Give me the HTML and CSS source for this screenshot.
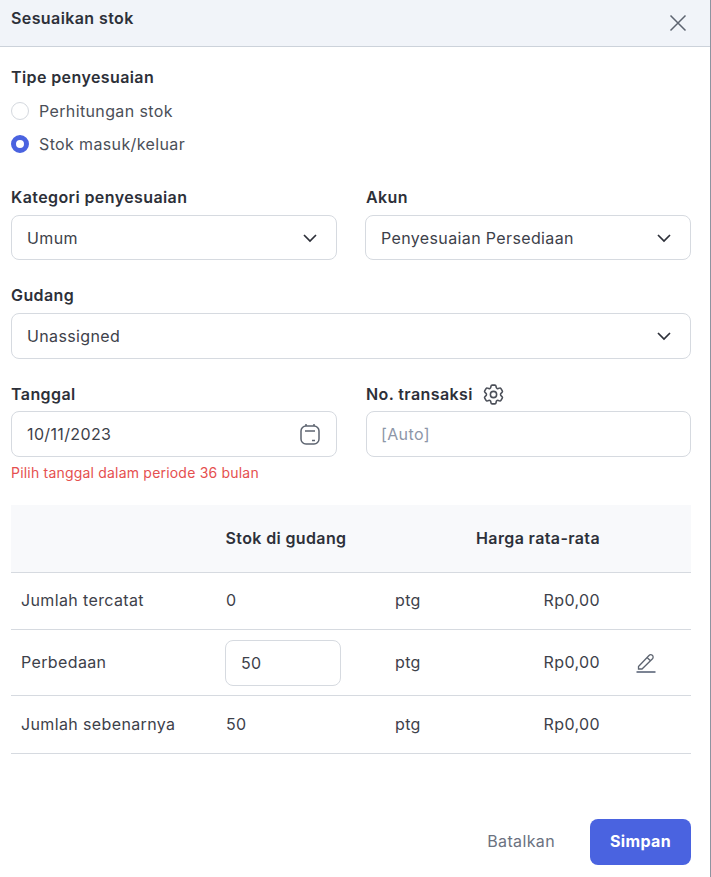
FILE: index.html
```html
<!DOCTYPE html>
<html lang="id">
<head>
<meta charset="utf-8">
<title>Sesuaikan stok</title>
<link rel="stylesheet" href="styles.css">
</head>
<body>
<div class="modal">
  <header class="head">
    <h1 class="title">Sesuaikan stok</h1>
    <svg class="close" width="18" height="18" viewBox="0 0 18 18"><path d="M1.500 1.500l15 15M16.500 1.500l-15 15"/></svg>
  </header>
  <main class="body">
    <div class="label tipe">Tipe penyesuaian</div>
    <div class="radio-row first"><span class="radio"></span>Perhitungan stok</div>
    <div class="radio-row"><span class="radio on"></span>Stok masuk/keluar</div>
    <div class="grid two r1">
      <div class="field">
        <div class="label">Kategori penyesuaian</div>
        <div class="input">Umum<svg class="chev" width="16" height="10" viewBox="0 0 16 10"><path d="M2 2l6 6 6-6"/></svg></div>
      </div>
      <div class="field">
        <div class="label">Akun</div>
        <div class="input">Penyesuaian Persediaan<svg class="chev" width="16" height="10" viewBox="0 0 16 10"><path d="M2 2l6 6 6-6"/></svg></div>
      </div>
    </div>
    <div class="field r2">
      <div class="label">Gudang</div>
      <div class="input tall">Unassigned<svg class="chev" width="16" height="10" viewBox="0 0 16 10"><path d="M2 2l6 6 6-6"/></svg></div>
    </div>
    <div class="grid two r3">
      <div class="field">
        <div class="label">Tanggal</div>
        <div class="input tall">10/11/2023<svg class="cal" width="20" height="22" viewBox="0 0 20 22"><rect x="1" y="3" width="18" height="18" rx="5"/><path d="M6 1v2M14 1v2M5 8h10M12 17.500h3"/></svg></div>
        <div class="error">Pilih tanggal dalam periode 36 bulan</div>
      </div>
      <div class="field">
        <div class="label">No. transaksi<svg class="gear" width="25" height="25" viewBox="0 0 24 24"><circle cx="12" cy="12" r="3"/><path d="M9.594 3.940c.09-.542.56-.94 1.110-.94h2.593c.55 0 1.020.398 1.110.94l.213 1.281c.063.374.313.686.645.870.074.04.147.083.22.127.324.196.72.257 1.075.124l1.217-.456a1.125 1.125 0 011.370.49l1.296 2.247a1.125 1.125 0 01-.26 1.431l-1.003.827c-.293.24-.438.613-.431.992a6.759 6.759 0 010 .255c-.007.378.138.75.43.99l1.005.828c.424.35.534.954.26 1.430l-1.298 2.247a1.125 1.125 0 01-1.369.491l-1.217-.456c-.355-.133-.75-.072-1.076.124a6.570 6.570 0 01-.22.128c-.331.183-.581.495-.644.869l-.213 1.280c-.09.543-.56.941-1.110.941h-2.594c-.55 0-1.020-.398-1.110-.94l-.213-1.281c-.062-.374-.312-.686-.644-.87a6.520 6.520 0 01-.22-.127c-.325-.196-.72-.257-1.076-.124l-1.217.456a1.125 1.125 0 01-1.369-.49l-1.297-2.247a1.125 1.125 0 01.26-1.431l1.004-.827c.292-.24.437-.613.43-.992a6.932 6.932 0 010-.255c.007-.378-.138-.75-.43-.99l-1.004-.828a1.125 1.125 0 01-.26-1.430l1.297-2.247a1.125 1.125 0 011.370-.491l1.216.456c.356.133.751.072 1.076-.124.072-.044.146-.087.22-.128.332-.183.582-.495.644-.869l.214-1.281z"/></svg></div>
        <div class="input tall placeholder">[Auto]</div>
      </div>
    </div>
    <div class="table">
      <div class="row thead"><span></span><span class="c-stock">Stok di gudang</span><span></span><span class="c-price">Harga rata-rata</span><span></span></div>
      <div class="row r-a"><span>Jumlah tercatat</span><span class="c-stock">0</span><span>ptg</span><span class="c-price">Rp0,00</span><span></span></div>
      <div class="row r-b"><span>Perbedaan</span><span class="c-stock"><span class="qty">50</span></span><span>ptg</span><span class="c-price">Rp0,00</span><span class="c-edit"><svg class="pen" width="22" height="22" viewBox="0 0 22 22"><path d="M3.500 15.500L14 4.500a2.300 2.300 0 0 1 3.500 3.200L7 18H3.500zM12 6.500l3.500 3.200"/><path class="pen-line" d="M1.500 21h19"/></svg></span></div>
      <div class="row r-c"><span>Jumlah sebenarnya</span><span class="c-stock">50</span><span>ptg</span><span class="c-price">Rp0,00</span><span></span></div>
    </div>
  </main>
  <footer class="foot">
    <span class="cancel">Batalkan</span>
    <span class="save">Simpan</span>
  </footer>
</div>
</body>
</html>
```
FILE: styles.css
```css
* { box-sizing: border-box; }
html, body { margin: 0; padding: 0; }
body { width: 711px; height: 877px; overflow: hidden; background: #fff; font-family: Inter, sans-serif; color: #2d3039; font-size: 16px; letter-spacing: .37px; }
.modal { display: flex; flex-direction: column; height: 877px; border-right: 1px solid #8e94a0; }
.head { height: 47px; flex: none; background: #f1f4f9; border-bottom: 1px solid #ccd2da; display: flex; justify-content: space-between; padding: 9px 23px 0 11px; }
.title { margin: 0; font-size: 16px; line-height: 18px; font-weight: 600; letter-spacing: .4px; }
.close { margin-top: 5px; fill: none; stroke: #5d6470; stroke-width: 1.500; }
.body { flex: 1; padding: 0 19px 0 11px; }
.label { font-size: 16px; line-height: 20px; font-weight: 600; letter-spacing: .4px; display: flex; align-items: center; gap: 9px; height: 20px; }
.tipe { margin-top: 20px; }
.radio-row { display: flex; align-items: center; gap: 10px; height: 20px; margin-top: 13px; line-height: 20px; color: #4b4f58; }
.radio-row.first { margin-top: 14px; }
.radio { width: 18px; height: 18px; border-radius: 50%; border: 1px solid #d4d8de; background: #fff; flex: none; }
.radio.on { border: 5px solid #4a63e0; }
.grid.two { display: grid; grid-template-columns: 326px 325px; column-gap: 29px; }
.r1 { margin-top: 33px; }
.r1 .field + .field .input { margin-left: -1px; padding-left: 15px; }
.r2 { margin-top: 25px; }
.r3 { margin-top: 26px; }
.input { margin-top: 8px; height: 45px; border: 1px solid #d6dae0; border-radius: 8px; display: flex; align-items: center; justify-content: space-between; padding: 0 18px 0 15px; color: #3d414a; }
.input.tall { height: 46px; }
.r3 .label { margin-top: -1px; }
.r3 .input { margin-top: 7px; }
.placeholder { color: #8d96a8; padding-left: 14px; }
.chev { fill: none; stroke: #2d3039; stroke-width: 1.700; }
.cal { fill: none; stroke: #5d6470; stroke-width: 1.500; margin-right: -2px; }
.gear { fill: none; stroke: #4b4f58; stroke-width: 1.500; margin-left: -1px; }
.error { margin-top: 7px; font-size: 14px; line-height: 18px; letter-spacing: .2px; color: #e5504f; }
.table { margin-top: 23px; }
.row { display: grid; grid-template-columns: 205px 169px 64px 141px 101px; padding: 0 0 2px 10px; align-items: center; border-bottom: 1px solid #d6dae0; color: #3d414a; }
.thead { height: 68px; background: #f8f9fb; font-weight: 600; color: #2d3039; }
.r-a { height: 57px; }
.r-b { height: 66px; }
.r-c { height: 58px; }
.c-price { text-align: right; }
.thead .c-price { white-space: nowrap; }
.thead .c-stock { margin-left: -.5px; }
.c-edit { display: flex; padding-left: 35px; margin-top: 1px; }
.qty { display: flex; align-items: center; width: 116px; height: 46px; padding-left: 15px; margin: 2px 0 0 -1px; border: 1px solid #d6dae0; border-radius: 8px; }
.pen { fill: none; stroke: #5d6470; stroke-width: 1.300; }
.pen-line { stroke: #7c8494; stroke-width: 2; }
.foot { flex: none; height: 46px; padding-right: 19px; display: flex; justify-content: flex-end; align-items: center; gap: 35px; margin-bottom: 12px; }
.cancel { color: #6b7280; margin-top: -2px; }
.save { width: 101px; height: 46px; padding-bottom: 2px; background: #4a63e0; border-radius: 8px; color: #fff; font-weight: 700; display: flex; align-items: center; justify-content: center; }
```
